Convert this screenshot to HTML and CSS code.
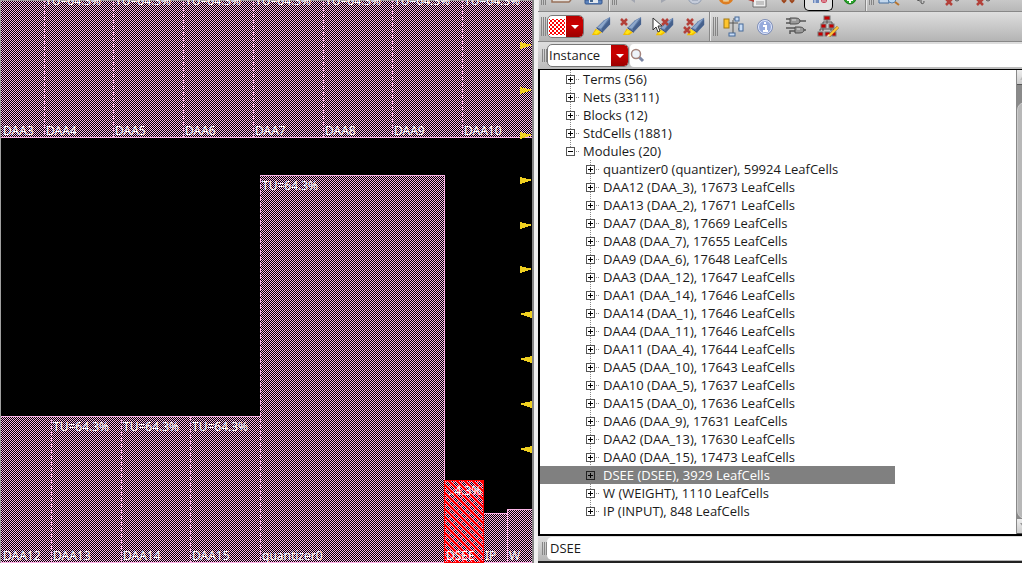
FILE: index.html
```
<!DOCTYPE html>
<html lang="en">
<head>
<meta charset="utf-8">
<title>Floorplan</title>
<link rel="stylesheet" href="styles.css">
</head>
<body>
<svg class="defs" aria-hidden="true">
  <defs>
    <symbol id="pen" viewBox="0 0 22 22">
      <path d="M1 21 5 14l7 4-4 3z" fill="#f2bd00"/><path d="M3 19l3-4 4 2-4 3z" fill="#ffe616"/>
      <path d="M6 13 14 5 21 1v8l-8 9z" fill="#5a78a6"/>
      <path d="M7 13l8-8 5-3-9 12z" fill="#8ea8cb"/>
      <path d="M12 18l9-9V3l-9 11z" fill="#46618c"/>
      <path d="M6 13l7 5" stroke="#33486c"/>
    </symbol>
    <symbol id="cross" viewBox="0 0 8 8"><path d="M1 1l6 6M7 1 1 7" stroke="#b3413a" stroke-width="2.5"/></symbol>
  </defs>
</svg>
<div class="app">
  <section class="floorplan" aria-label="Floorplan view">
    <svg class="canvas" width="100%" height="100%">
      <defs>
        <pattern id="dots" width="2" height="2" patternUnits="userSpaceOnUse">
          <rect width="2" height="2" fill="#000"/><rect width="1" height="1" fill="#fbb4e6"/><rect x="1" y="1" width="1" height="1" fill="#fbb4e6"/>
        </pattern>
        <pattern id="hatch" width="8" height="8" patternUnits="userSpaceOnUse">
          <path d="M-1-1 9 9M-1 7 1 9M7-1 9 1" stroke="#f00" stroke-width="1.5"/>
          <path d="M9-1-1 9M-1 1 1-1M7 9 9 7" stroke="#f00" stroke-width="1"/>
        </pattern>
      </defs>
      <g class="blocks">
        <rect x="1" y="1" width="531" height="137"/>
        <rect x="1" y="416" width="260" height="147"/>
        <rect x="260" y="175" width="185" height="388"/>
        <rect x="444" y="480" width="40" height="83"/>
        <rect x="484" y="513" width="24" height="50"/>
        <rect x="507" y="509" width="25" height="54"/>
      </g>
      <path class="edge" d="M1 137.500H532M1 416.500H260M260 175.500H445M444.500 175V480M484 513.500H507M507 509.500H532M1 562.500H532M507.500 509V563"/>
      <path class="edge dashed" d="M44.500 1V137M113.500 1V137M183.500 1V137M253.500 1V137M323.500 1V137M392.500 1V137M462.500 1V137M51.500 416V563M121.500 416V563M190.500 416V563M260.500 175V563"/>
      <rect class="selected" x="444.500" y="480.500" width="39" height="82"/>
      <g class="labels">
        <text x="45" y="5">TU=64.3%</text><text x="115" y="5">TU=64.3%</text><text x="185" y="5">TU=64.3%</text><text x="255" y="5">TU=64.3%</text><text x="325" y="5">TU=64.3%</text><text x="394" y="5">TU=64.3%</text><text x="464" y="5">TU=64.3%</text>
        <text x="3" y="135">DAA3</text><text x="46" y="135">DAA4</text><text x="115" y="135">DAA5</text><text x="185" y="135">DAA6</text><text x="255" y="135">DAA7</text><text x="325" y="135">DAA8</text><text x="394" y="135">DAA9</text><text x="464" y="135">DAA10</text>
        <text x="262" y="190">TU=64.3%</text><text x="53" y="431">TU=64.3%</text><text x="123" y="431">TU=64.3%</text><text x="192" y="431">TU=64.3%</text>
        <text x="3" y="560">DAA12</text><text x="53" y="560">DAA13</text><text x="123" y="560">DAA14</text><text x="192" y="560">DAA15</text><text x="262" y="560">quantizer0</text>
        <text x="448" y="495">..4.3%</text><text x="446" y="560">DSEE</text><text x="485" y="560">IP</text><text x="509" y="560">W</text>
      </g>
      <path class="pins" d="M520 42l13 3-13 4zM520 87l13 3-13 4zM520 132l13 3-13 4zM520 177l13 3-13 4zM520 222l13 3-13 4zM520 266l13 3-13 4zM532 311l-13 3 13 4zM532 356l-13 3 13 4zM532 401l-13 3 13 4zM532 446l-13 3 13 4z"/>
    </svg>
  </section>

  <main class="browser">
    <div class="toolbar clipped">
      <div class="group">
        <span class="grip"></span>
        <button aria-label="Open"><svg width="24" height="12"><path d="M2 0v2h17l2-2" fill="#e4e0dc" stroke="#97705a" stroke-width="1.500"/></svg></button>
        <button aria-label="Save"><svg width="24" height="12"><path d="M4 0h17v3q0 1-1 1H5q-1 0-1-1z" fill="#5d84bd" stroke="#37578d"/><path d="M8 0h9v3H8z" fill="#e4e9ee"/><path d="M9 0h3v2H9z" fill="#44658e"/></svg></button>
      </div>
      <div class="group">
        <span class="grip"></span>
        <button aria-label="Undo"><svg width="24" height="12"><path d="M10 0l4 3V0" fill="#a2a6b0"/></svg></button>
        <button aria-label="Redo"><svg width="24" height="12"><path d="M9 3l5-3H9z" fill="#a2a6b0"/></svg></button>
        <button aria-label="Stop"><svg width="24" height="12"><circle cx="12" cy="-3" r="7" fill="#c5ccda" stroke="#929daf"/><path d="M9 0h6" stroke="#8994aa"/></svg></button>
        <button aria-label="Refresh"><svg width="24" height="12"><circle cx="12" cy="-3" r="6" fill="none" stroke="#dc7d22" stroke-width="3"/><path d="M9 1h6" stroke="#ffcc72"/></svg></button>
        <button aria-label="Report"><svg width="24" height="12"><path d="M8-1h13v8H8z" fill="#eee" stroke="#707070"/><path d="M11 2h8M11 4h8" stroke="#999"/><path d="M3 0l6-1v3z" fill="#b13c32"/></svg></button>
        <button aria-label="Find"><svg width="24" height="12"><path d="M6 0l2 2 2-2M14 0l2 2 2-2" stroke="#9d451b" stroke-width="2" fill="none"/></svg></button>
        <button class="pressed" aria-label="Toggle view"><svg width="24" height="12"><path d="M6 0h6v3H6z" fill="#6e8abe"/><path d="M8 0v3" stroke="#ecf1fb"/><circle cx="17" cy="0" r="3" fill="#c73a4d"/><path d="M15 1h4" stroke="#efc7d0"/></svg></button>
        <button aria-label="Add"><svg width="24" height="12"><circle cx="12" cy="-2" r="6" fill="#2ba52b" stroke="#147719"/><path d="M12-3v6M9 0h6" stroke="#fff" stroke-width="2"/></svg></button>
      </div>
      <div class="group last">
        <span class="grip"></span>
        <button aria-label="Zoom"><svg width="24" height="12"><path d="M1 0v3h10V0" fill="#c3d7ed" stroke="#456d9b"/><circle cx="14" cy="-1" r="4" fill="#b9d8f3" stroke="#5983af"/><path d="M17 2l4 3" stroke="#b9742c" stroke-width="2"/></svg></button>
        <button aria-label="Select"><svg width="24" height="12"><path d="M8 0l3 1M12 0v3q3 2 3-2" fill="none" stroke="#555"/></svg></button>
        <button aria-label="Clear"><svg width="24" height="12"><use href="#cross" x="5" y="-2" width="8" height="8"/><circle cx="17" cy="-1" r="2" fill="none" stroke="#555"/></svg></button>
        <button aria-label="Clear all"><svg width="24" height="12"><use href="#cross" x="5" y="-2" width="8" height="8"/><circle cx="17" cy="-1" r="2" fill="none" stroke="#555"/></svg></button>
      </div>
    </div>

    <div class="toolbar">
      <div class="group">
        <span class="grip"></span>
        <button class="swatch" aria-label="Highlight pattern">
          <svg width="18" height="18"><defs><pattern id="check" width="4" height="4" patternUnits="userSpaceOnUse"><rect width="4" height="4" fill="#fff"/><path d="M0 0h2v2H0zM2 2h2v2H2z" fill="#f00"/></pattern></defs><rect x="1" y="1" width="16" height="16" fill="url(#check)"/></svg>
          <span class="arrow"></span>
        </button>
        <button aria-label="Highlight"><svg width="24" height="24"><use href="#pen" x="2" y="1" width="20" height="20"/></svg></button>
        <button aria-label="Clear highlight"><svg width="24" height="24"><use href="#pen" x="2" y="1" width="20" height="20"/><use href="#cross" x="0" y="3" width="8" height="8"/></svg></button>
        <button aria-label="Clear selected highlight"><svg width="24" height="24"><use href="#pen" x="4" y="2" width="19" height="19"/><use href="#cross" x="10" y="3" width="8" height="8"/><path d="M2 3v12l3-3 2 5 2-1-2-5h4z" fill="#fff" stroke="#333"/></svg></button>
        <button aria-label="Clear all highlights"><svg width="24" height="24"><use href="#pen" x="4" y="2" width="19" height="19"/><use href="#cross" x="4" y="3" width="8" height="8"/><use href="#cross" x="1" y="11" width="8" height="8"/></svg></button>
      </div>
      <div class="group last">
        <span class="grip"></span>
        <button aria-label="Hierarchy"><svg width="24" height="24"><path d="M7 8h9M11 5v15M11 4h2M16 14h3" stroke="#555" fill="none"/><rect x="2" y="4" width="5" height="9" fill="#ffc52c" stroke="#a37810"/><g fill="#c8dcf5" stroke="#456898"><rect x="13" y="2" width="4" height="4"/><rect x="17" y="9" width="4" height="7"/><rect x="7" y="18" width="6" height="3"/></g></svg></button>
        <button aria-label="Information"><svg width="24" height="24"><circle cx="12" cy="12" r="7.500" fill="#8ca1d4" stroke="#8190b8"/><circle cx="12" cy="12" r="6.500" fill="#97abdc" stroke="#e2e9fb"/><path d="M10 11h3v5M10 16h5M12 7v2" stroke="#fff" stroke-width="2" fill="none"/></svg></button>
        <button aria-label="Schematic"><svg width="24" height="24"><path d="M2 4h5M2 8h5M15 6h7M2 13h9M6 19v-3h5M18 15h4" stroke="#555" stroke-width="1.500" fill="none"/><path d="M6 3h5q5 0 5 3t-5 3H6zM11 12h4q5 0 5 3t-5 3h-4z" fill="#999" stroke="#4c4c4c"/><path d="M8 5h4M13 14h3" stroke="#ddd"/></svg></button>
        <button aria-label="Edit hierarchy"><svg width="24" height="24"><path d="M12 4v5M8 9V7h9v2M5 16v-2h14v2M8 12v4M16 12v4" stroke="#555" fill="none"/><g fill="#c40000" stroke="#777"><rect x="9" y="1" width="6" height="4"/><rect x="6" y="9" width="5" height="4"/><rect x="14" y="9" width="5" height="4"/><rect x="3" y="17" width="5" height="4"/><rect x="10" y="17" width="5" height="4"/><rect x="17" y="17" width="4" height="4"/></g><path d="M23 12l-9 9" stroke="#9b6414" stroke-width="3"/><path d="M23 12l-9 9" stroke="#ffc83a" stroke-width="2"/><path d="M12 22l1-3 2 2z" fill="#ffe8bd"/></svg></button>
      </div>
    </div>

    <div class="search-row">
      <span class="grip"></span>
      <label class="combo">
        <select aria-label="Object type"><option>Instance</option></select>
        <span class="arrow"></span>
      </label>
      <label class="search">
        <svg width="16" height="16"><path d="M9 9l4 4" stroke="#7b86a5" stroke-width="3"/><circle cx="6" cy="6" r="4.500" fill="#eef3fa" stroke="#a5847d" stroke-width="1.500"/></svg>
        <input type="text" aria-label="Search">
      </label>
    </div>

    <div class="tree-pane">
      <ul class="tree">
        <li><button class="box" aria-label="Expand"></button>Terms (56)</li>
        <li><button class="box" aria-label="Expand"></button>Nets (33111)</li>
        <li><button class="box" aria-label="Expand"></button>Blocks (12)</li>
        <li><button class="box" aria-label="Expand"></button>StdCells (1881)</li>
        <li class="end"><button class="box open" aria-label="Collapse"></button>Modules (20)</li>
        <li class="child"><button class="box" aria-label="Expand"></button>quantizer0 (quantizer), 59924 LeafCells</li>
        <li class="child"><button class="box" aria-label="Expand"></button>DAA12 (DAA_3), 17673 LeafCells</li>
        <li class="child"><button class="box" aria-label="Expand"></button>DAA13 (DAA_2), 17671 LeafCells</li>
        <li class="child"><button class="box" aria-label="Expand"></button>DAA7 (DAA_8), 17669 LeafCells</li>
        <li class="child"><button class="box" aria-label="Expand"></button>DAA8 (DAA_7), 17655 LeafCells</li>
        <li class="child"><button class="box" aria-label="Expand"></button>DAA9 (DAA_6), 17648 LeafCells</li>
        <li class="child"><button class="box" aria-label="Expand"></button>DAA3 (DAA_12), 17647 LeafCells</li>
        <li class="child"><button class="box" aria-label="Expand"></button>DAA1 (DAA_14), 17646 LeafCells</li>
        <li class="child"><button class="box" aria-label="Expand"></button>DAA14 (DAA_1), 17646 LeafCells</li>
        <li class="child"><button class="box" aria-label="Expand"></button>DAA4 (DAA_11), 17646 LeafCells</li>
        <li class="child"><button class="box" aria-label="Expand"></button>DAA11 (DAA_4), 17644 LeafCells</li>
        <li class="child"><button class="box" aria-label="Expand"></button>DAA5 (DAA_10), 17643 LeafCells</li>
        <li class="child"><button class="box" aria-label="Expand"></button>DAA10 (DAA_5), 17637 LeafCells</li>
        <li class="child"><button class="box" aria-label="Expand"></button>DAA15 (DAA_0), 17636 LeafCells</li>
        <li class="child"><button class="box" aria-label="Expand"></button>DAA6 (DAA_9), 17631 LeafCells</li>
        <li class="child"><button class="box" aria-label="Expand"></button>DAA2 (DAA_13), 17630 LeafCells</li>
        <li class="child"><button class="box" aria-label="Expand"></button>DAA0 (DAA_15), 17473 LeafCells</li>
        <li class="child current"><button class="box" aria-label="Expand"></button>DSEE (DSEE), 3929 LeafCells</li>
        <li class="child"><button class="box" aria-label="Expand"></button>W (WEIGHT), 1110 LeafCells</li>
        <li class="child end"><button class="box" aria-label="Expand"></button>IP (INPUT), 848 LeafCells</li>
      </ul>
      <div class="scrollbar">
        <button class="step" aria-label="Scroll up"><svg width="6" height="14"><path d="M3 10l3-5v5z" fill="#bbb"/></svg></button>
        <div class="thumb"></div>
        <button class="step" aria-label="Scroll down"><svg width="6" height="14"><path d="M3 4h3v4z" fill="#999"/></svg></button>
      </div>
    </div>

    <div class="status">
      <span class="grip"></span>
      <input type="text" aria-label="Selected instance" value="DSEE">
    </div>
  </main>
</div>
</body>
</html>
```
FILE: styles.css
```
* { box-sizing: border-box; }
html, body { height: 100%; }
body {
  margin: 0;
  background: #e6e6e6;
  color: #1a1a1a;
  font: 13px/18px "Open Sans", "Noto Sans", sans-serif;
  overflow: hidden;
}
button, input, select { font: inherit; color: inherit; margin: 0; padding: 0; border: 0; background: none; outline: 0; }
svg { display: block; }
.defs { position: absolute; width: 0; height: 0; }
.app { display: grid; grid-template-columns: 534fr 488fr; height: 100vh; }

/* Floorplan */
.floorplan { background: #000; border-right: 2px solid #858585; box-shadow: inset 1px 1px #a0a0a0; overflow: hidden; min-width: 0; }
.canvas { shape-rendering: crispEdges; }
.blocks { fill: url(#dots); }
.edge { fill: none; stroke: #fbb4e6; }
.dashed { stroke-dasharray: 2 1; }
.selected { fill: url(#hatch); stroke: #f00; }
.labels { fill: #fff; font-family: "Noto Sans", sans-serif; font-size: 12px; }
.pins { fill: #f0d020; }

/* Browser panel */
.browser { display: flex; flex-direction: column; min-width: 0; padding-left: 4px; background: #eee; }
.toolbar { flex: none; display: flex; height: 30px; background: linear-gradient(#dedede, #b4b4b4); border-bottom: 1px solid #888; }
.toolbar.clipped { height: 12px; background: linear-gradient(#c8c8c8, #b8b8b8); overflow: hidden; }
.group { display: flex; align-items: center; padding-left: 2px; border-right: 1px solid #888; box-shadow: inset 1px 0 #e8e8e8; }
.group.last { flex: 1; border-right: 0; }
.group > button { width: 31px; flex: none; display: flex; justify-content: center; }
.grip { flex: none; width: 6px; align-self: stretch; margin: 5px 0; background: repeating-linear-gradient(90deg, transparent 0 1px, #858585 1px 2px); }
.clipped .grip { margin: 0 0 6px; }
.clipped .group { align-items: flex-start; }
.group > .pressed { height: 11px; border: 1px solid #000; border-top: 0; border-radius: 0 0 5px 5px; background: #e2e2e2; margin: 0 1px; width: 29px; }
.group > .swatch { width: 37px; height: 23px; margin: 0 1px; align-items: center; justify-content: space-between; background: #fff; border: 1px solid #777; border-radius: 5px; overflow: hidden; }
.arrow { width: 17px; align-self: stretch; display: flex; align-items: center; justify-content: center; background: linear-gradient(#b80000, #cb0000 40%, #9c0000); border-radius: 0 4px 4px 0; pointer-events: none; }
.arrow::after { content: ""; border: 4px solid transparent; border-top-color: #fff; border-bottom: 0; }

.search-row { flex: none; display: flex; height: 27px; padding: 1px 0 2px 3px; background: linear-gradient(#dedede, #bbb); border-top: 1px solid #ddd; }
.combo { display: flex; width: 82px; margin-right: 1px; background: #fff; border: 1px solid #777; border-radius: 5px; overflow: hidden; }
.combo select { flex: 1; min-width: 0; appearance: none; padding: 0 0 1px 1px; }
.search { flex: 1; display: flex; align-items: center; background: #fff; border-radius: 4px 0 0 4px; min-width: 0; }
.search input { flex: 1; min-width: 0; }

.tree-pane { flex: 1; min-height: 0; display: flex; background: #fff; border: solid #000; border-width: 1px 0 2px 2px; }
.tree { flex: 1; margin: 0; padding: 0; list-style: none; overflow: hidden; }
.tree li { display: flex; align-items: center; height: 18px; padding-left: 26px; background: repeating-linear-gradient(#888 0 1px, transparent 1px 2px) 30px 0 / 1px 100% no-repeat; }
.tree li.child { padding-left: 46px; background-position: 50px 0; }
.tree li.end { background-size: 1px 9px; }
.tree li.current { width: 355px; background-color: #808080; color: #fff; }
.box { flex: none; width: 9px; height: 9px; margin-right: 8px; border: 1px solid #555; background: linear-gradient(#000, #000) center / 5px 1px no-repeat, linear-gradient(#000, #000) center / 1px 5px no-repeat, #fff; position: relative; }
.box.open { background: linear-gradient(#000, #000) center / 5px 1px no-repeat, #fff; }
.box::after { content: ""; position: absolute; left: 9px; top: 3px; width: 3px; height: 1px; background: repeating-linear-gradient(90deg, #888 0 1px, transparent 1px 2px); }
.current .box { border-color: #222; background-color: #808080; }

.scrollbar { flex: none; display: flex; flex-direction: column; width: 6px; background: #8a8a8a; border-left: 1px solid #888; overflow: hidden; }
.step { height: 15px; background: linear-gradient(#eee, #ccc); border-bottom: 1px solid #555; }
.thumb { flex: 1; margin-top: 17px; width: 16px; background: #b8b8b8; border: 1px solid #ccc; border-radius: 8px; }

.status { flex: none; display: flex; height: 27px; padding: 1px 0 1px 3px; background: linear-gradient(#dedede, #b4b4b4); border-bottom: 2px solid #222; }
.status input { flex: 1; min-width: 0; background: #fff; border-radius: 5px 0 0 5px; padding: 0 0 1px 3px; }
```
